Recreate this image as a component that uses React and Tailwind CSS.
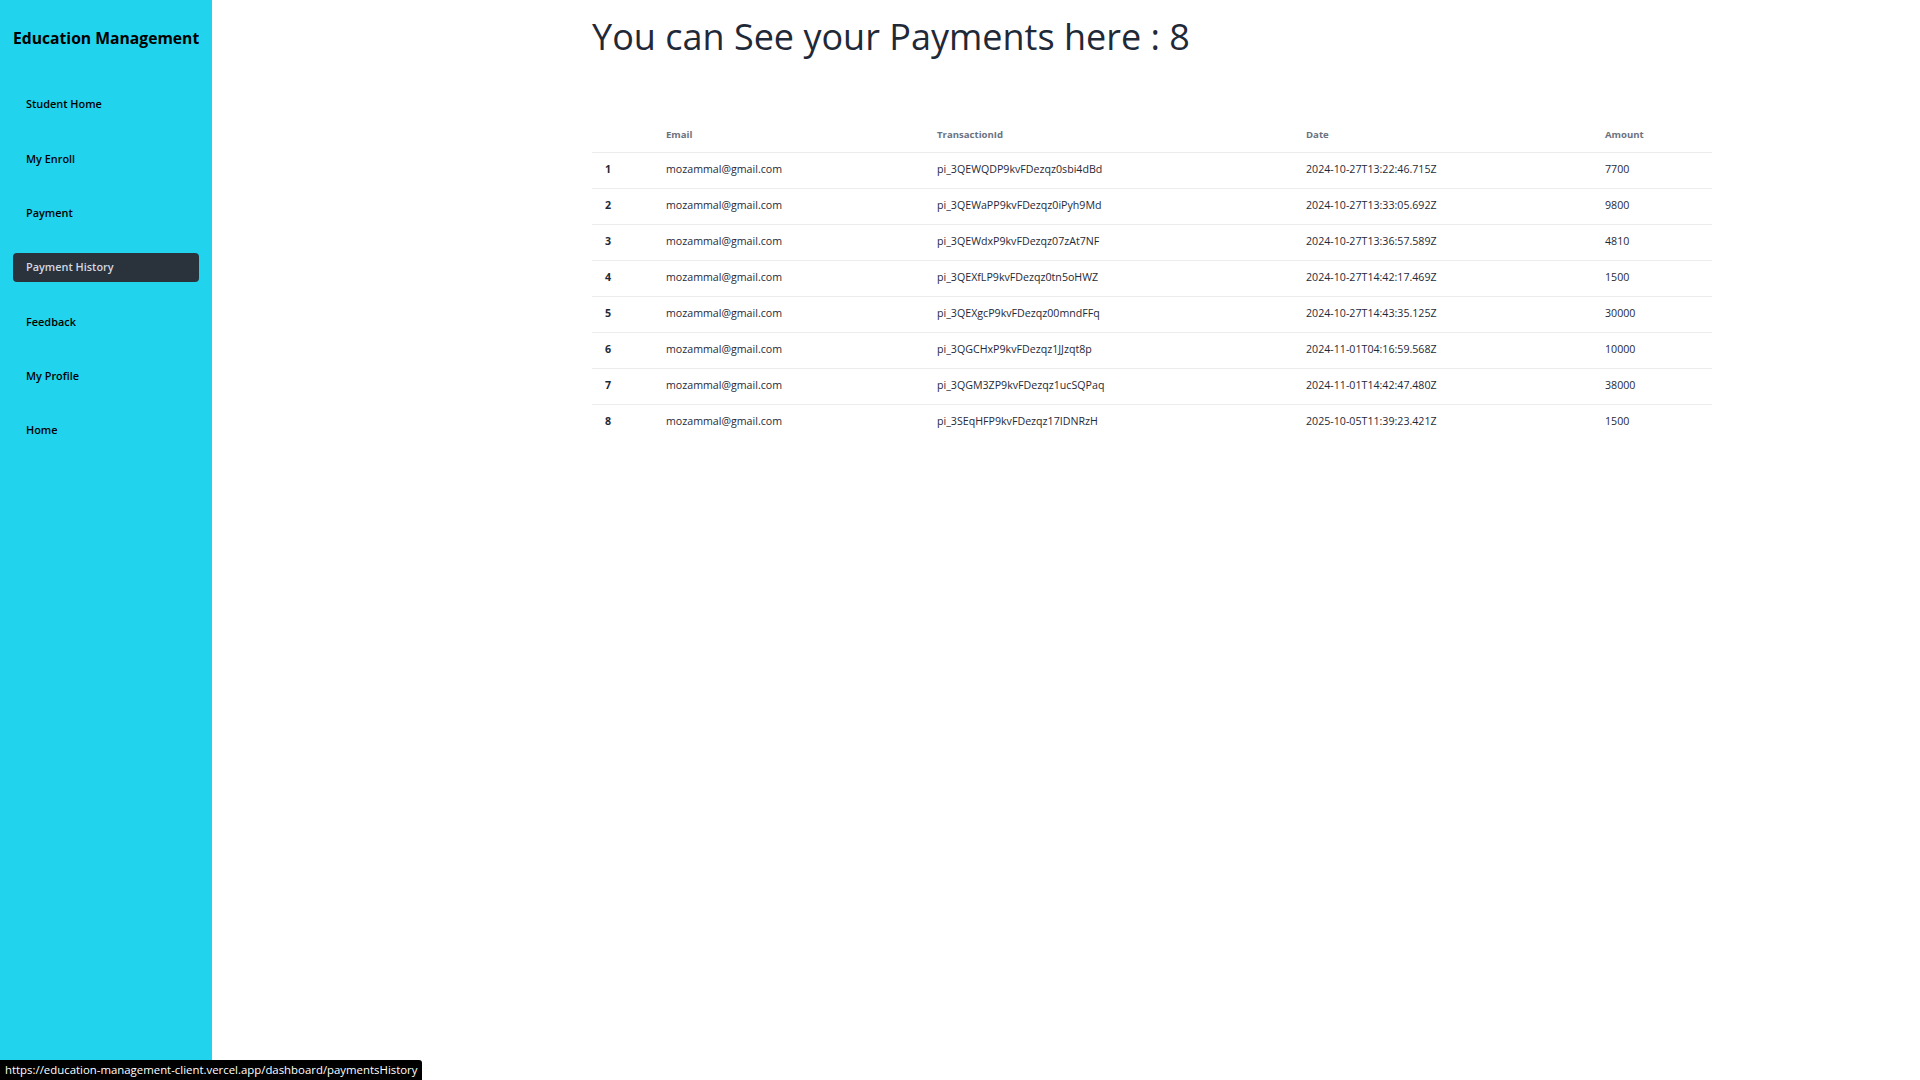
const payments = [
  { email: "mozammal@gmail.com", tid: "pi_3QEWQDP9kvFDezqz0sbi4dBd", date: "2024-10-27T13:22:46.715Z", amount: 7700 },
  { email: "mozammal@gmail.com", tid: "pi_3QEWaPP9kvFDezqz0iPyh9Md", date: "2024-10-27T13:33:05.692Z", amount: 9800 },
  { email: "mozammal@gmail.com", tid: "pi_3QEWdxP9kvFDezqz07zAt7NF", date: "2024-10-27T13:36:57.589Z", amount: 4810 },
  { email: "mozammal@gmail.com", tid: "pi_3QEXfLP9kvFDezqz0tn5oHWZ", date: "2024-10-27T14:42:17.469Z", amount: 1500 },
  { email: "mozammal@gmail.com", tid: "pi_3QEXgcP9kvFDezqz00mndFFq", date: "2024-10-27T14:43:35.125Z", amount: 30000 },
  { email: "mozammal@gmail.com", tid: "pi_3QGCHxP9kvFDezqz1JJzqt8p", date: "2024-11-01T04:16:59.568Z", amount: 10000 },
  { email: "mozammal@gmail.com", tid: "pi_3QGM3ZP9kvFDezqz1ucSQPaq", date: "2024-11-01T14:42:47.480Z", amount: 38000 },
  { email: "mozammal@gmail.com", tid: "pi_3SEqHFP9kvFDezqz17IDNRzH", date: "2025-10-05T11:39:23.421Z", amount: 1500 },
];

const links = ["Student Home", "My Enroll", "Payment", "Payment History", "Feedback", "My Profile", "Home"];

const Sidebar = () => (
  <aside className="w-[212px] shrink-0 bg-[#22d3ee] px-[13px] pt-[24px] min-h-screen">
    <h2 className="text-[15.7px] font-bold text-black leading-[28px] whitespace-nowrap">Education Management</h2>
    <ul className="mt-[38px] flex flex-col gap-[25.5px]">
      {links.map((l) => (
        <li
          key={l}
          className={
            l === "Payment History"
              ? "rounded-[4px] bg-[#2a323c] text-[#d3d8e2] px-[13px] py-[6.4px] text-[10.9px] leading-[16px] font-semibold"
              : "px-[13px] py-[6.4px] text-[10.9px] leading-[16px] font-semibold text-black"
          }
        >
          {l}
        </li>
      ))}
    </ul>
  </aside>
);

export default function App() {
  return (
    <div className="relative flex min-h-screen bg-white" style={{ fontFamily: '"Open Sans", "Noto Sans", sans-serif' }}>
      <Sidebar />

      {/* Payments */}
      <main className="flex-1 pl-[380px]">
        <div className="w-[1120px]">
          <h1 className="mt-[7px] text-[36px] leading-[60px] text-[#1f2937]">You can See your Payments here : 8</h1>
          <table className="mt-[52px] w-full text-left text-[10.65px] text-[#1f2937]">
            <thead>
              <tr className="border-b border-[#ececec]">
                <th className="h-[33px] w-[61px]"></th>
                <th className="w-[271px] px-[13px] text-[9.6px] font-bold text-[#6b7280]">Email</th>
                <th className="w-[369px] px-[13px] text-[9.6px] font-bold text-[#6b7280]">TransactionId</th>
                <th className="w-[299px] px-[13px] text-[9.6px] font-bold text-[#6b7280]">Date</th>
                <th className="px-[13px] text-[9.6px] font-bold text-[#6b7280]">Amount</th>
              </tr>
            </thead>
            <tbody>
              {payments.map((p, i) => (
                <tr key={p.tid} className={i < payments.length - 1 ? "border-b border-[#ececec]" : ""}>
                  <th className="h-[36px] px-[13px] font-bold">{i + 1}</th>
                  <td className="px-[13px]">{p.email}</td>
                  <td className="px-[13px]">{p.tid}</td>
                  <td className="px-[13px]">{p.date}</td>
                  <td className="px-[13px]">{p.amount}</td>
                </tr>
              ))}
            </tbody>
          </table>
        </div>
      </main>

      {/* status bar */}
      <div className="absolute bottom-0 left-0 rounded-tr-[3px] bg-black px-[5px] py-[2px] text-[11.4px] leading-[16px] text-white">
        https://education-management-client.vercel.app/dashboard/paymentsHistory
      </div>
    </div>
  );
}
